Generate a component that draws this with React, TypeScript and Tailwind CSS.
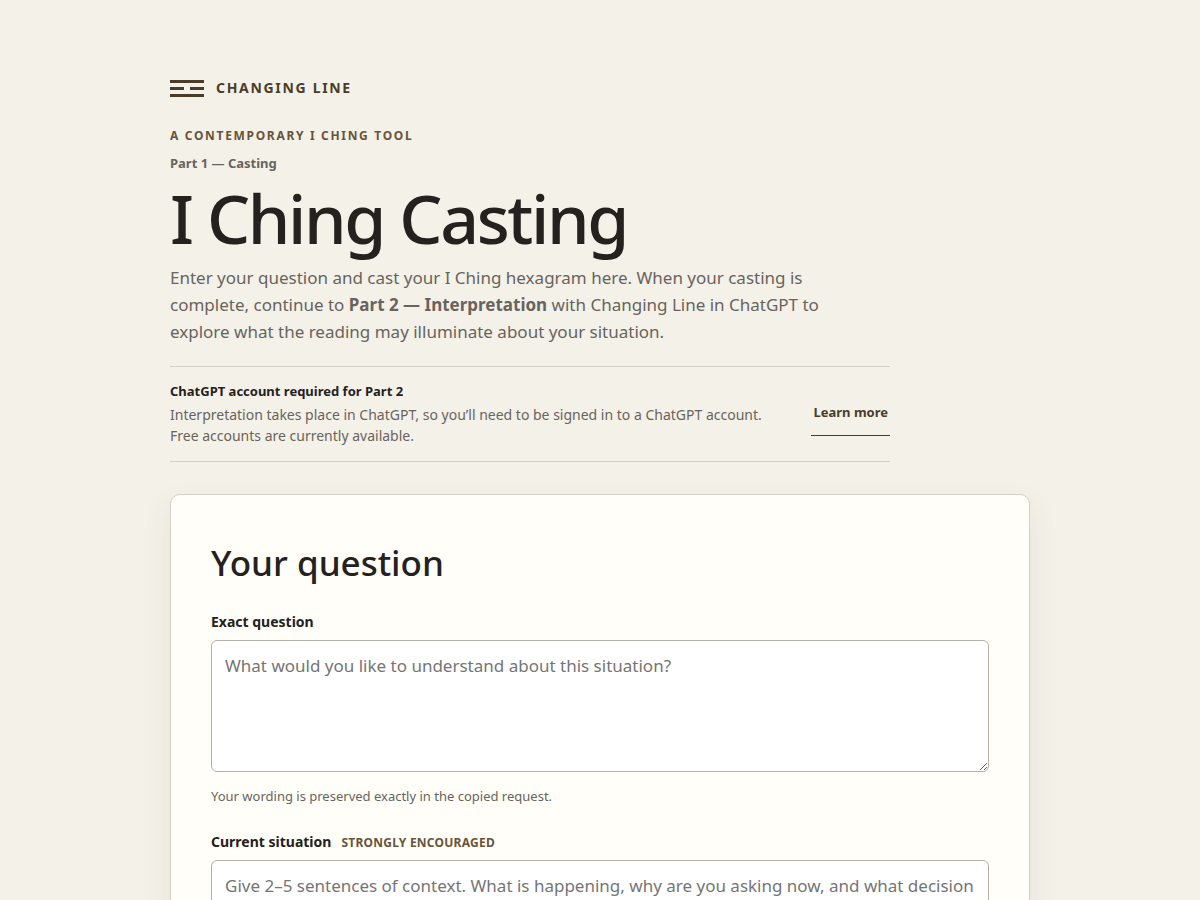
import React, { useState } from 'react';

const fieldClass =
  'mt-1.5 block h-[132px] w-full resize-y rounded-md border border-[#b5b1a7] bg-white px-[13px] py-3 text-[17px] leading-[26px] text-[#24211d] placeholder:text-[#757575] focus:outline-2 focus:outline-[#655238]';

const BrandMark: React.FC = () => (
  <svg width="34" height="17" viewBox="0 0 34 17" fill="#4b3c28" aria-hidden="true">
    <rect x="0" y="0" width="34" height="3" />
    <rect x="0" y="7" width="14" height="3" />
    <rect x="20" y="7" width="14" height="3" />
    <rect x="0" y="14" width="34" height="3" />
  </svg>
);

const AccountNotice: React.FC = () => (
  <aside className="mt-[21px] flex max-w-[720px] items-center justify-between gap-6 border-y border-[#d3d0c7] pt-3.5 pb-[15px]">
    <div>
      <p className="text-[13px] leading-5 font-bold">ChatGPT account required for Part 2</p>
      <p className="mt-[3px] max-w-[600px] text-sm leading-[21px] text-[#68645d]">
        Interpretation takes place in ChatGPT, so you’ll need to be signed in to a ChatGPT account. Free accounts are
        currently available.
      </p>
    </div>
    <a
      href="#learn-more"
      className="flex h-11 shrink-0 items-center border-b border-[#4b3c28] px-0.5 text-[13px] font-bold text-[#4b3c28]"
    >
      Learn more
    </a>
  </aside>
);

const App: React.FC = () => {
  const [question, setQuestion] = useState('');
  const [situation, setSituation] = useState('');

  return (
    <div className="min-h-screen bg-[#f4f1e9] px-6 pt-[76px] pb-20 font-['Noto_Sans',sans-serif] text-[#24211f]">
      <div className="mx-auto max-w-[860px]">
        <header>
          <a href="#top" className="flex w-fit items-center gap-3 text-[#4b3c28]">
            <BrandMark />
            <span className="text-sm leading-6 font-bold tracking-[0.12em] uppercase">Changing Line</span>
          </a>

          <p className="mt-[26px] text-xs leading-5 font-bold tracking-[0.14em] text-[#67543a] uppercase">
            A contemporary I Ching tool
          </p>
          <p className="mt-[7px] text-[13px] leading-5 font-bold text-[#68645d]">Part 1 — Casting</p>
          <h1 className="mt-[9px] text-[68px] leading-[72px] font-medium tracking-[-0.035em]">I Ching Casting</h1>
          <p className="mt-2.5 max-w-[680px] text-[17px] leading-[27px] text-[#68645d]">
            Enter your question and cast your I Ching hexagram here. When your casting is complete, continue to{' '}
            <strong className="font-bold">Part 2 — Interpretation</strong> with Changing Line in ChatGPT to explore
            what the reading may illuminate about your situation.
          </p>

          <AccountNotice />
        </header>

        <main className="mt-8 rounded-[10px] border border-[#d3d0c7] bg-[#fffef8] p-10 shadow-[0_10px_30px_rgba(75,60,30,0.08)]">
          <form onSubmit={e => e.preventDefault()}>
            <h2 className="text-[35px] leading-[56px] font-medium">Your question</h2>

            <div className="mt-[19px]">
              <label htmlFor="question" className="block text-sm leading-6 font-bold">
                Exact question
              </label>
              <textarea
                id="question"
                className={fieldClass}
                value={question}
                onChange={e => setQuestion(e.target.value)}
                placeholder="What would you like to understand about this situation?"
              />
              <p className="mt-3.5 text-[13px] leading-5 text-[#68645d]">
                Your wording is preserved exactly in the copied request.
              </p>
            </div>

            <div className="mt-6">
              <label htmlFor="situation" className="block text-sm leading-6 font-bold">
                Current situation
                <span className="ml-2.5 text-xs leading-none tracking-[0.02em] text-[#67543a] uppercase">
                  Strongly encouraged
                </span>
              </label>
              <textarea
                id="situation"
                className={fieldClass}
                value={situation}
                onChange={e => setSituation(e.target.value)}
                placeholder="Give 2–5 sentences of context. What is happening, why are you asking now, and what decision"
              />
            </div>
          </form>
        </main>
      </div>
    </div>
  );
};

export default App;
